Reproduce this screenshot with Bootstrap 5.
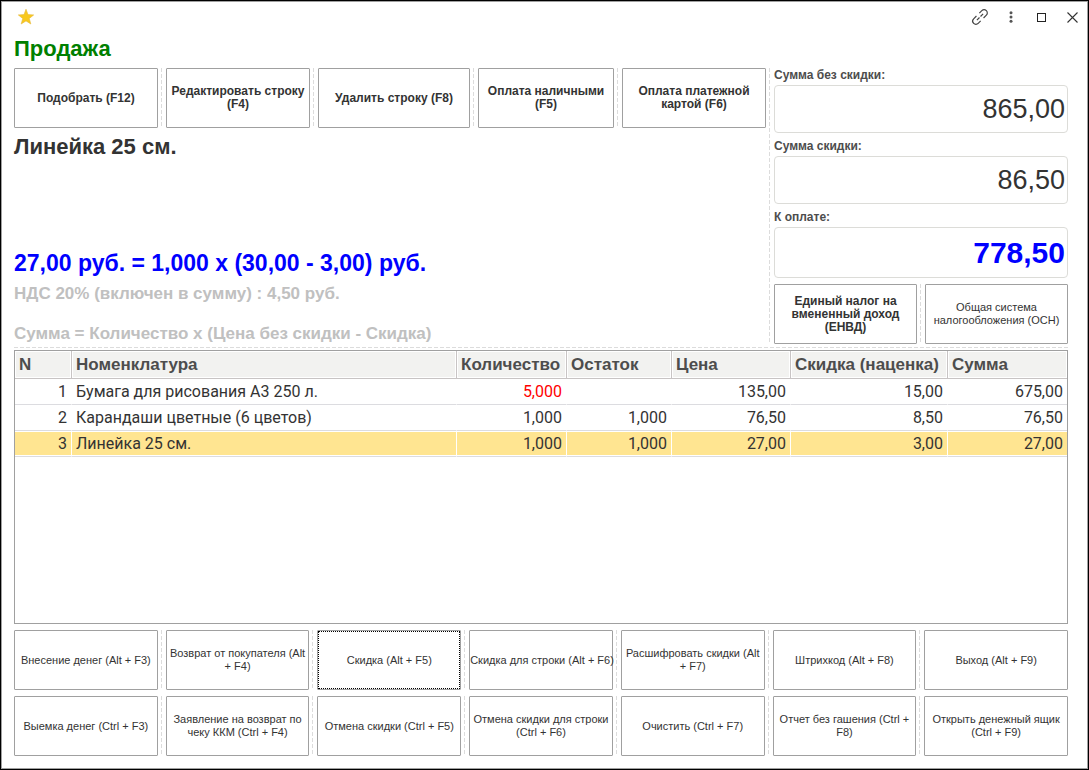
<!DOCTYPE html>
<html lang="ru">
<head>
<meta charset="utf-8">
<meta name="viewport" content="width=device-width, initial-scale=1">
<title>Продажа</title>
<link href="https://cdn.jsdelivr.net/npm/bootstrap@5.3.0/dist/css/bootstrap.min.css" rel="stylesheet">
<style>
  :root { --ink: #333; --line: #a0a0a0; --dash: #dcdcdc; }
  body { font-family: "Liberation Sans", Arial, sans-serif; color: var(--ink); background: #fff; }
  .pos-window { border: 1px solid #000; box-shadow: inset 0 0 0 1px #a0a0a0; padding: 2px 20px 13px 13px; }
  .title-bar { height: 28px; margin-right: -20px; padding-left: 3px; }
  .win-btn { width: 31px; height: 24px; padding: 0; border: 0; background: none; color: #444; display: flex; align-items: center; justify-content: center; }
  .fav-btn { width: 18px; }
  .page-title { font-size: 22px; line-height: 26px; font-weight: 700; color: #008000; margin: 5px 0 6px; }

  .top-grid { display: grid; grid-template-columns: 752fr 294fr; column-gap: 8px; }
  .pay-grid { display: grid; grid-template-columns: 144fr 144fr 152fr 136fr 144fr; column-gap: 8px; }
  .tax-grid { display: grid; grid-template-columns: 1fr 1fr; column-gap: 8px; }
  .cmd-grid { display: grid; grid-template-columns: repeat(7, minmax(0, 1fr)); column-gap: 8px; }

  .split { position: relative; display: grid; grid-template-columns: minmax(0, 1fr); }
  .split + .split::before { content: ""; position: absolute; left: -5px; top: 0; bottom: 2px; width: 1px;
    background: repeating-linear-gradient(var(--dash) 0 4px, transparent 4px 6px); }
  .dash-row { height: 1px; margin: 3px 0 2px; background: repeating-linear-gradient(90deg, var(--dash) 0 4px, transparent 4px 6px); }

  .cmd { min-height: 60px; padding: 0; border: 1px solid var(--line); border-radius: 1px; background: #fff; color: var(--ink);
    font-size: 11px; line-height: 13px; text-align: center; }
  .cmd:hover { background: #f7f7f7; }
  .cmd-strong { font-size: 12px; font-weight: 700; }
  .cmd-nowrap { white-space: nowrap; }
  .cmd-current { outline: 1px dotted #000; outline-offset: -2px; }

  .item-name { font-size: 22px; line-height: 26px; font-weight: 700; margin: 6px 0 0; }
  .calc-line { font-size: 23px; line-height: 26px; font-weight: 700; color: #00f; }
  .hint { font-size: 17px; line-height: 20px; font-weight: 700; color: #c0c0c0; }

  .sum-label { display: block; font-size: 12px; line-height: 14px; height: 17px; font-weight: 700; color: #4d4d4d; }
  .sum-box { height: 48px; margin-bottom: 6px; padding: 0 2px; border: 1px solid #dcdcd8; border-radius: 4px; text-align: right;
    font-size: 27px; color: var(--ink); background: #fff; width: 100%; }
  .sum-total { height: 51px; font-size: 30px; font-weight: 700; color: #00f; }

  .goods-pane { border: 1px solid var(--line); margin-bottom: 6px; min-height: 120px; }
  .goods { table-layout: fixed; width: 100%; border-collapse: separate; border-spacing: 0; font-size: 16px; line-height: 24px; }
  .goods th { height: 28px; padding: 0 0 0 4px; font-size: 17px; font-weight: 700; color: #4d4d4d; background: #f2f2f0; white-space: nowrap;
    border-bottom: 1px solid #c8c4c4; border-right: 1px solid #c8c4c4; box-shadow: inset 0 0 0 1px #fff; }
  .goods td { height: 26px; padding: 0 4px; font-family: Roboto, "Liberation Sans", sans-serif; text-align: right; white-space: nowrap;
    border-bottom: 1px solid #dcdce0; border-right: 1px solid #fff; }
  .goods th:last-child, .goods td:last-child { border-right: 0; }
  .goods .item-cell { text-align: left; }
  .goods .picked td { background: #ffe591; box-shadow: inset 0 1px #fff, inset 0 -1px #fff; }
  .goods .short { color: #f00; }
  .w-num { width: 57px; } .w-qty { width: 110px; } .w-rest { width: 105px; }
  .w-price { width: 119px; } .w-disc { width: 157px; } .w-sum { width: 119px; }
  .cmd-rows { row-gap: 6px; }
</style>
</head>
<body>
<div class="pos-window min-vh-100 d-flex flex-column">
  <header class="title-bar d-flex align-items-center">
    <button type="button" class="win-btn fav-btn" aria-label="В избранное">
      <svg width="18" height="18" viewBox="0 0 18 18"><path d="M9 1.200l2 5.400 5.700.3-4.400 3.600 1.500 5.500L9 12.900l-4.800 3.100 1.500-5.500L1.300 6.900 7 6.600z" fill="#f8c81e" stroke="#e6b93c" stroke-width=".6"/></svg>
    </button>
    <div class="ms-auto d-flex">
      <button type="button" class="win-btn" aria-label="Ссылка">
        <svg width="22" height="22" viewBox="0 0 24 24" fill="none" stroke="currentColor" stroke-width="1.300"><g transform="rotate(-45 12 12)"><path d="M9.500 15.500H5.700a3.500 3.500 0 0 1 0-7h4.300M14.500 8.500H18.300a3.500 3.500 0 0 1 0 7h-4.300M7.200 12h4M12.800 12h4"/></g></svg>
      </button>
      <button type="button" class="win-btn" aria-label="Ещё">
        <svg width="4" height="12" viewBox="0 0 4 12" fill="#555"><circle cx="2" cy="1.700" r="1.500"/><circle cx="2" cy="6" r="1.500"/><circle cx="2" cy="10.300" r="1.500"/></svg>
      </button>
      <button type="button" class="win-btn" aria-label="Развернуть">
        <svg width="9" height="9" viewBox="0 0 9 9"><rect x=".5" y=".5" width="8" height="8" fill="none" stroke="#222"/></svg>
      </button>
      <button type="button" class="win-btn" aria-label="Закрыть">
        <svg width="11" height="11" viewBox="0 0 11 11"><path d="M.5.5l10 10M10.500.5l-10 10" stroke="#333" stroke-width="1.100"/></svg>
      </button>
    </div>
  </header>

  <main class="flex-grow-1 d-flex flex-column">
    <h1 class="page-title">Продажа</h1>

    <div class="top-grid">
      <section class="split">
        <div class="d-flex flex-column">
          <div class="pay-grid">
            <div class="split"><button type="button" class="cmd cmd-strong">Подобрать (F12)</button></div>
            <div class="split"><button type="button" class="cmd cmd-strong">Редактировать строку (F4)</button></div>
            <div class="split"><button type="button" class="cmd cmd-strong">Удалить строку (F8)</button></div>
            <div class="split"><button type="button" class="cmd cmd-strong">Оплата наличными (F5)</button></div>
            <div class="split"><button type="button" class="cmd cmd-strong">Оплата платежной<br>картой (F6)</button></div>
          </div>
          <h2 class="item-name">Линейка 25 см.</h2>
          <div class="mt-auto">
            <div class="calc-line mb-2">27,00 руб. = 1,000 x (30,00 - 3,00) руб.</div>
            <div class="hint">НДС 20% (включен в сумму) : 4,50 руб.</div>
            <div class="hint mt-3 pt-1">Сумма = Количество x (Цена без скидки - Скидка)</div>
          </div>
        </div>
      </section>
      <section class="split">
        <div>
          <label class="sum-label" for="gross">Сумма без скидки:</label>
          <input class="sum-box d-block" id="gross" type="text" value="865,00" readonly>
          <label class="sum-label" for="discount">Сумма скидки:</label>
          <input class="sum-box d-block" id="discount" type="text" value="86,50" readonly>
          <label class="sum-label" for="total">К оплате:</label>
          <input class="sum-box sum-total d-block" id="total" type="text" value="778,50" readonly>
          <div class="tax-grid">
            <div class="split"><button type="button" class="cmd cmd-strong">Единый налог на<br>вмененный доход<br>(ЕНВД)</button></div>
            <div class="split"><button type="button" class="cmd">Общая система налогообложения (ОСН)</button></div>
          </div>
        </div>
      </section>
    </div>
    <div class="dash-row"></div>

    <div class="goods-pane flex-grow-1">
      <table class="goods">
        <colgroup><col class="w-num"><col><col class="w-qty"><col class="w-rest"><col class="w-price"><col class="w-disc"><col class="w-sum"></colgroup>
        <thead>
          <tr><th scope="col">N</th><th scope="col">Номенклатура</th><th scope="col">Количество</th><th scope="col">Остаток</th><th scope="col">Цена</th><th scope="col">Скидка (наценка)</th><th scope="col">Сумма</th></tr>
        </thead>
        <tbody>
          <tr><td>1</td><td class="item-cell">Бумага для рисования А3 250 л.</td><td class="short">5,000</td><td></td><td>135,00</td><td>15,00</td><td>675,00</td></tr>
          <tr><td>2</td><td class="item-cell">Карандаши цветные (6 цветов)</td><td>1,000</td><td>1,000</td><td>76,50</td><td>8,50</td><td>76,50</td></tr>
          <tr class="picked"><td>3</td><td class="item-cell">Линейка 25 см.</td><td>1,000</td><td>1,000</td><td>27,00</td><td>3,00</td><td>27,00</td></tr>
        </tbody>
      </table>
    </div>

    <div class="cmd-rows d-grid">
      <div class="cmd-grid">
        <div class="split"><button type="button" class="cmd">Внесение денег (Alt + F3)</button></div>
        <div class="split"><button type="button" class="cmd">Возврат от покупателя (Alt<br>+ F4)</button></div>
        <div class="split"><button type="button" class="cmd cmd-current">Скидка (Alt + F5)</button></div>
        <div class="split"><button type="button" class="cmd cmd-nowrap">Скидка для строки (Alt + F6)</button></div>
        <div class="split"><button type="button" class="cmd">Расшифровать скидки (Alt<br>+ F7)</button></div>
        <div class="split"><button type="button" class="cmd">Штрихкод (Alt + F8)</button></div>
        <div class="split"><button type="button" class="cmd">Выход (Alt + F9)</button></div>
      </div>
      <div class="cmd-grid">
        <div class="split"><button type="button" class="cmd">Выемка денег (Ctrl + F3)</button></div>
        <div class="split"><button type="button" class="cmd">Заявление на возврат по<br>чеку ККМ (Ctrl + F4)</button></div>
        <div class="split"><button type="button" class="cmd">Отмена скидки (Ctrl + F5)</button></div>
        <div class="split"><button type="button" class="cmd">Отмена скидки для строки<br>(Ctrl + F6)</button></div>
        <div class="split"><button type="button" class="cmd">Очистить (Ctrl + F7)</button></div>
        <div class="split"><button type="button" class="cmd">Отчет без гашения (Ctrl +<br>F8)</button></div>
        <div class="split"><button type="button" class="cmd">Открыть денежный ящик<br>(Ctrl + F9)</button></div>
      </div>
    </div>
  </main>
</div>
<script src="https://cdn.jsdelivr.net/npm/bootstrap@5.3.0/dist/js/bootstrap.bundle.min.js"></script>
</body>
</html>
